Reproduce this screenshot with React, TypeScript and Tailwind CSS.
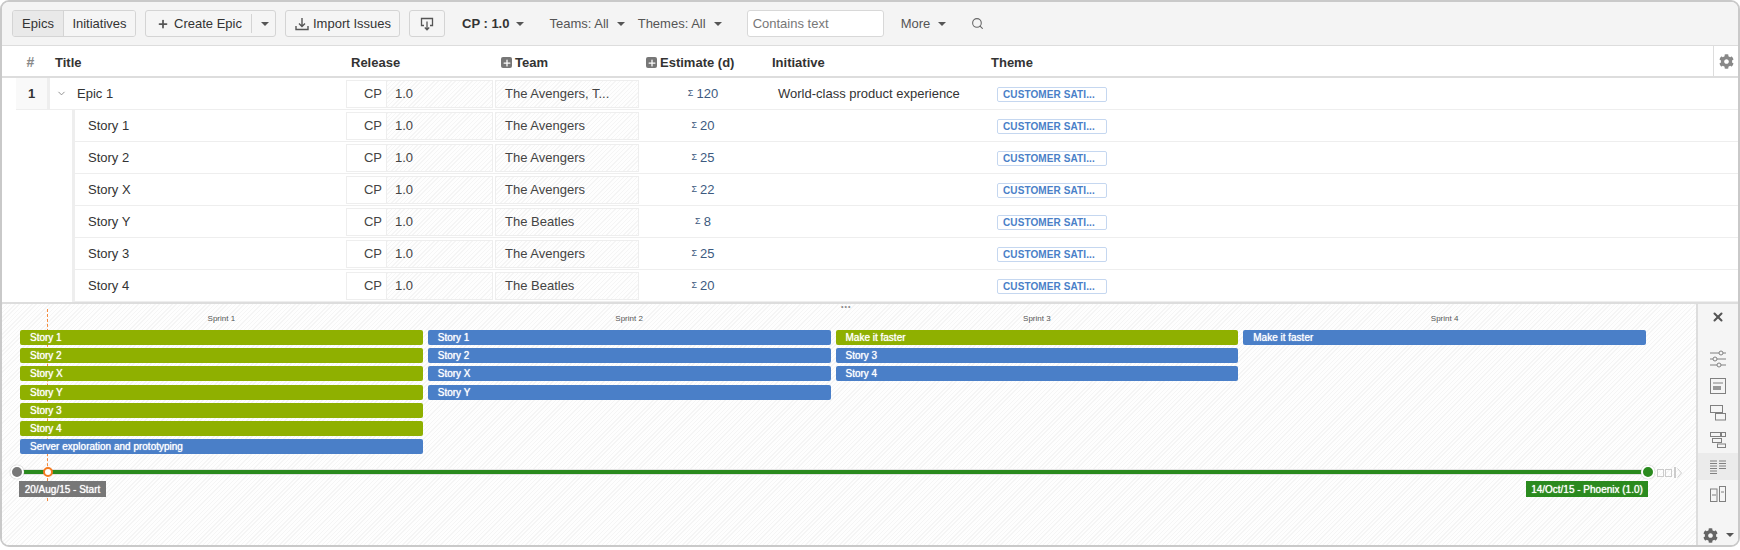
import React from 'react';
import { Plus, Search, X, ChevronDown } from 'lucide-react';
import { FaCog } from 'react-icons/fa';

const hatch =
  'bg-[repeating-linear-gradient(135deg,#f5f5f5_0,#f5f5f5_1px,#fefefe_1px,#fefefe_3px)]';

const stories = [
  { title: 'Story 1', team: 'The Avengers', est: '20' },
  { title: 'Story 2', team: 'The Avengers', est: '25' },
  { title: 'Story X', team: 'The Avengers', est: '22' },
  { title: 'Story Y', team: 'The Beatles', est: '8' },
  { title: 'Story 3', team: 'The Avengers', est: '25' },
  { title: 'Story 4', team: 'The Beatles', est: '20' },
];

type Bar = { label: string; color: 'green' | 'blue' };

const sprints: { name: string; bars: Bar[] }[] = [
  {
    name: 'Sprint 1',
    bars: [
      { label: 'Story 1', color: 'green' },
      { label: 'Story 2', color: 'green' },
      { label: 'Story X', color: 'green' },
      { label: 'Story Y', color: 'green' },
      { label: 'Story 3', color: 'green' },
      { label: 'Story 4', color: 'green' },
      { label: 'Server exploration and prototyping', color: 'blue' },
    ],
  },
  {
    name: 'Sprint 2',
    bars: [
      { label: 'Story 1', color: 'blue' },
      { label: 'Story 2', color: 'blue' },
      { label: 'Story X', color: 'blue' },
      { label: 'Story Y', color: 'blue' },
    ],
  },
  {
    name: 'Sprint 3',
    bars: [
      { label: 'Make it faster', color: 'green' },
      { label: 'Story 3', color: 'blue' },
      { label: 'Story 4', color: 'blue' },
    ],
  },
  {
    name: 'Sprint 4',
    bars: [{ label: 'Make it faster', color: 'blue' }],
  },
];

const Caret = ({ className = '' }: { className?: string }) => (
  <span className={`inline-block w-0 h-0 border-x-[4px] border-x-transparent border-t-[4px] border-t-[#555] ${className}`} />
);

const ToolButton = ({ children, className = '' }: { children: React.ReactNode; className?: string }) => (
  <div className={`h-[27px] flex items-center bg-[#f5f5f5] border border-[#d4d4d4] rounded-[3px] text-[#333] ${className}`}>
    {children}
  </div>
);

const PlusBox = () => (
  <span className="w-[11px] h-[11px] rounded-[2px] bg-[#777] flex items-center justify-center shrink-0">
    <Plus size={10} strokeWidth={3} className="text-white" />
  </span>
);

const Tag = () => (
  <div className="w-[110px] h-[15px] flex items-center px-[5px] bg-white border border-[#c5d7f0] rounded-[2px] text-[10px] tracking-[0.1px] font-bold text-[#4a7fc8] whitespace-nowrap">
    CUSTOMER SATI...
  </div>
);

const Row = ({ first, title, team, est }: { first?: boolean; title: string; team: string; est: string }) => (
  <div className="h-[32px] flex ml-[14px] text-[13px] text-[#333]">
    {first ? (
      <div className="w-[59px] shrink-0 flex items-center border-b border-[#eeeeee]">
        <div className="w-[34px] h-full flex items-center justify-center font-bold bg-[#f9f9f9] border-r-[3px] border-[#eeeeee]">1</div>
        <ChevronDown size={11} className="ml-[6px] text-[#888]" />
      </div>
    ) : (
      <div className="w-[59px] shrink-0 border-r-[3px] border-[#eeeeee]" />
    )}
    <div className="flex-1 flex items-center pt-px border-b border-[#eeeeee]">
      <div className={`w-[271px] ${first ? 'pl-[2px]' : 'pl-[13px]'}`}>{title}</div>
      <div className="w-[147px] h-[28px] flex border border-[#eeeeee] text-[#444]">
        <div className="w-[40px] pr-[4px] flex items-center justify-end bg-white border-r border-[#eeeeee]">CP</div>
        <div className={`flex-1 flex items-center pl-[8px] ${hatch}`}>1.0</div>
      </div>
      <div className={`w-[144px] h-[28px] ml-[2px] flex items-center pl-[9px] border border-[#eeeeee] text-[#444] ${hatch}`}>
        {team}
      </div>
      <div className="w-[124px] pl-[4px] flex items-center justify-center text-[#3d5a80]">
        <span className="text-[9px] mr-[3px]">Σ</span>
        {est}
      </div>
      <div className="w-[234px] pl-[15px] whitespace-nowrap">{first ? 'World-class product experience' : ''}</div>
      <Tag />
    </div>
  </div>
);

const TimelineBar = ({ label, color }: Bar) => (
  <div
    className={`h-[15px] flex items-center pl-[10px] rounded-[2px] text-[10px] text-white whitespace-nowrap [text-shadow:0_0_1px_#ffffff] ${
      color === 'green' ? 'bg-[#8fb000]' : 'bg-[#4a7fc8]'
    }`}
  >
    {label}
  </div>
);

const SideIcon = ({ active, children }: { active?: boolean; children: React.ReactNode }) => (
  <div className={`h-[27px] flex items-center justify-center ${active ? 'bg-[#ebebeb]' : ''}`}>
    <svg width="18" height="18" viewBox="0 0 18 18" fill="none" stroke="#808080" strokeWidth="1">
      {children}
    </svg>
  </div>
);

export default function App() {
  return (
    <div className="w-[1740px] h-[550px] bg-white pb-[3px] font-['Liberation_Sans',Arial,sans-serif]">
      <div className="h-full flex flex-col border-2 border-[#c9c9c9] rounded-[9px] overflow-hidden">
        {/* toolbar */}
        <div className="h-[44px] shrink-0 flex items-center pl-[10px] bg-[#f4f4f4] border-b border-[#dddddd] text-[13px]">
          <div className="flex h-[27px] border border-[#d4d4d4] rounded-[3px] overflow-hidden text-[#333]">
            <div className="w-[51px] flex items-center justify-center bg-[#e9e9e9] border-r border-[#d4d4d4]">Epics</div>
            <div className="w-[71px] flex items-center justify-center bg-[#f5f5f5]">Initiatives</div>
          </div>
          <ToolButton className="w-[131px] ml-[9px] pl-[11px]">
            <Plus size={12} strokeWidth={3.5} className="text-[#555] mr-[5px]" />
            <span>Create Epic</span>
            <span className="w-px h-[19px] bg-[#d4d4d4] ml-[9px] mr-[9px]" />
            <Caret />
          </ToolButton>
          <ToolButton className="w-[115px] ml-[9px] pl-[9px]">
            <svg width="14" height="14" viewBox="0 0 14 14" fill="none" stroke="#555" strokeWidth="1.4" className="mr-[4px]">
              <path d="M7 1v8M4 6.5 7 9.5l3-3M1 9v3.5h12V9" />
            </svg>
            <span>Import Issues</span>
          </ToolButton>
          <ToolButton className="w-[36px] ml-[9px] justify-center">
            <svg width="14" height="14" viewBox="0 0 14 14" fill="none" stroke="#555" strokeWidth="1.3">
              <path d="M4 8.5H1.5v-7h11v7H10M7 4.5v8M4.8 10.5 7 12.8l2.2-2.3" />
            </svg>
          </ToolButton>
          <span className="ml-[17px] font-bold text-[#333]">CP : 1.0</span>
          <Caret className="ml-[7px]" />
          <span className="ml-[25px] text-[#555]">Teams: All</span>
          <Caret className="ml-[8px]" />
          <span className="ml-[13px] text-[#555]">Themes: All</span>
          <Caret className="ml-[8px]" />
          <div className="w-[137px] h-[27px] ml-[25px] flex items-center pl-[5px] bg-white border border-[#d8d8d8] rounded-[3px] text-[#777]">
            Contains text
          </div>
          <span className="ml-[17px] text-[#555]">More</span>
          <Caret className="ml-[8px]" />
          <Search size={13} className="ml-[25px] text-[#666]" strokeWidth={2} />
        </div>

        {/* column headers */}
        <div className="h-[32px] shrink-0 flex items-center pt-[3px] border-b-2 border-[#dddddd] text-[13px] font-bold text-[#333]">
          <div className="w-[53px] text-center text-[#888] text-[14px] pl-[4px]">#</div>
          <div className="w-[296px]">Title</div>
          <div className="w-[150px]">Release</div>
          <div className="w-[145px] flex items-center gap-[2px]">
            <PlusBox />
            <span className="ml-[1px]">Team</span>
          </div>
          <div className="w-[126px] flex items-center gap-[2px]">
            <PlusBox />
            <span className="ml-[1px]">Estimate (d)</span>
          </div>
          <div className="w-[219px]">Initiative</div>
          <div className="w-[722px]">Theme</div>
          <div className="w-[25px] self-stretch -mt-[3px] pt-px flex items-center justify-center border-l border-[#dddddd]">
            <FaCog size={15} className="text-[#888]" />
          </div>
        </div>

        {/* rows */}
        <div className="shrink-0 h-[224px] overflow-hidden">
          <Row first title="Epic 1" team="The Avengers, T..." est="120" />
          {stories.map((s) => (
            <Row key={s.title} title={s.title} team={s.team} est={s.est} />
          ))}
        </div>

        {/* timeline */}
        <div className="flex-1 flex border-t-2 border-[#dddddd] min-h-0">
          <div className={`relative flex-1 ${hatch}`}>
            {/* today marker, runs behind the bars */}
            <div className="absolute left-[45px] top-[5px] h-[192px] border-l-[1.5px] border-dashed border-[#f58a3c]" />

            <div className="absolute left-[839px] top-0 text-[#888] text-[7px] leading-[6px] tracking-[1px]">•••</div>
            <div className="relative pl-[18px] pr-[50px] pt-[8px] grid grid-cols-4 gap-x-[5px]">
              {sprints.map((sprint) => (
                <div key={sprint.name} className="flex flex-col">
                  <div className="h-[18px] text-center text-[8px] leading-[14px] text-[#555]">{sprint.name}</div>
                  <div className="flex flex-col gap-[3.2px]">
                    {sprint.bars.map((bar, i) => (
                      <TimelineBar key={i} label={bar.label} color={bar.color} />
                    ))}
                  </div>
                </div>
              ))}
            </div>

            {/* slider */}
            <div className="absolute left-[15px] top-[165px] w-[1632px] h-[6px] bg-[#2a8a1e] border border-[#e3e3e3]" />
            <div className="absolute left-[8px] top-[161px] w-[14px] h-[14px] rounded-full bg-[#777] border-2 border-white shadow-[0_0_1px_#999]" />
            <div className="absolute left-[41px] top-[163px] w-[10px] h-[10px] rounded-full bg-white border-2 border-[#f47a20]" />
            <div className="absolute left-[1639px] top-[161px] w-[14px] h-[14px] rounded-full bg-[#2a8a1e] border-2 border-white shadow-[0_0_1px_#999]" />
            <div className="absolute left-[1655px] top-[163px] flex items-center gap-[1px]">
              <span className="w-[7px] h-[8px] border border-[#ccc]" />
              <span className="w-[7px] h-[8px] border border-[#ccc]" />
              <span className="w-[2px] h-[11px] ml-[1px] bg-[#ccc]" />
              <svg width="5" height="10" viewBox="0 0 5 10" fill="none" stroke="#ccc" strokeWidth="1">
                <path d="M0.5 0.5 4.5 5 0.5 9.5" />
              </svg>
            </div>

            <div className="absolute left-[17px] top-[177px] w-[87px] h-[16px] flex items-center justify-center bg-[#777] text-white text-[10px] whitespace-nowrap [text-shadow:0_0_1px_#ffffff]">
              20/Aug/15 - Start
            </div>
            <div className="absolute left-[1524px] top-[177px] w-[122px] h-[16px] flex items-center justify-center bg-[#2a8a1e] text-white text-[10px] whitespace-nowrap [text-shadow:0_0_1px_#ffffff]">
              14/Oct/15 - Phoenix (1.0)
            </div>
          </div>

          {/* side rail */}
          <div className="w-[42px] shrink-0 flex flex-col bg-[#f5f5f5] border-l-2 border-[#dddddd]">
            <div className="h-[26px] flex items-center justify-center">
              <X size={14} strokeWidth={3.5} className="text-[#555]" />
            </div>
            <div className="mt-[15px]" />
            <SideIcon>
              <path d="M1 3h9M14 3h3M1 9h3M8 9h9M1 15h7M12 15h5" />
              <circle cx="12" cy="3" r="2" />
              <circle cx="6" cy="9" r="2" />
              <circle cx="10" cy="15" r="2" />
            </SideIcon>
            <SideIcon>
              <rect x="1.5" y="1.5" width="15" height="15" />
              <path d="M4 6h10" />
              <rect x="4" y="9" width="8" height="4" fill="#999" stroke="none" />
            </SideIcon>
            <SideIcon>
              <rect x="1.5" y="1.5" width="12" height="7" />
              <rect x="6.5" y="9.5" width="10" height="6.5" />
            </SideIcon>
            <SideIcon>
              <rect x="1.5" y="1.5" width="10" height="4" />
              <rect x="12.5" y="1.5" width="4" height="4" />
              <rect x="3.5" y="7.5" width="9" height="4" />
              <rect x="8.5" y="13" width="8" height="3.5" />
            </SideIcon>
            <SideIcon active>
              <path d="M1 3h7M1 5.5h7M1 8h7M1 10.5h7M1 13h7M1 15.5h7M10 3h7M10 5.5h7M10 8h7M10 10.5h7" />
            </SideIcon>
            <SideIcon>
              <rect x="1.5" y="4" width="6.5" height="12.5" />
              <rect x="10.5" y="1.5" width="6" height="15" />
              <path d="M3 10h4M12 7h3" />
            </SideIcon>
            <div className="flex-1" />
            <div className="h-[20px] flex items-center pl-[5px]">
              <FaCog size={15} className="text-[#666]" />
              <Caret className="ml-[8px]" />
            </div>
          </div>
        </div>
      </div>
    </div>
  );
}
